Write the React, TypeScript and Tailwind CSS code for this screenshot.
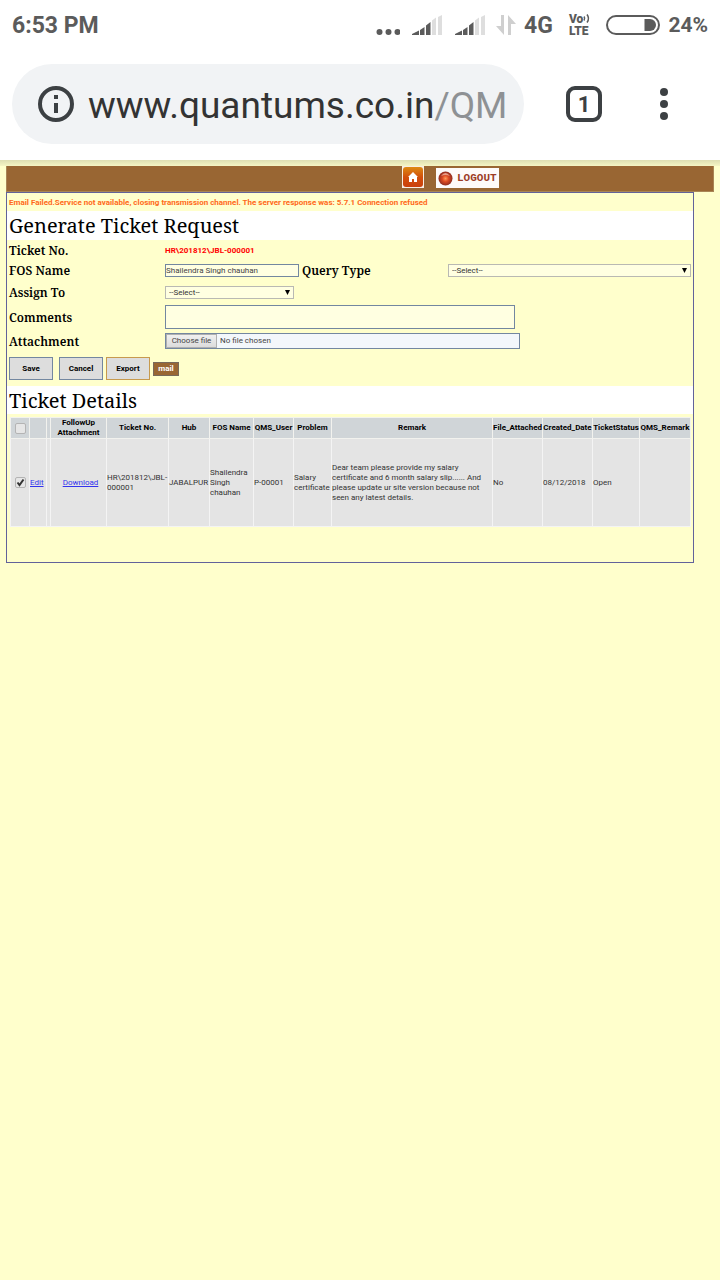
import React from "react";

const serif = "font-['Noto_Serif','DejaVu_Serif_Condensed','DejaVu_Serif',serif]";

function Signal() {
  return (
    <svg className="mb-[2px] h-5 w-[30px]" viewBox="0 0 30 20" aria-hidden="true">
      <path d="M0 20V19L7 15.500V20ZM8 15l4.500-3V20H8ZM14 10.500l4.500-3.500V20H14Z" fill="#5b5b5b" />
      <path d="M20 5.500l4-3V20H20ZM26 2l4-2V20H26Z" fill="#dedede" />
    </svg>
  );
}

function StatusBar() {
  return (
    <div className="flex h-12 items-center justify-between pt-[3px] pr-3 pl-3 text-[#5b5b5b]">
      <span className="pt-[1px] text-[23px] font-bold">6:53 PM</span>
      <div className="flex items-center">
        <svg className="mt-3 mr-3 h-2 w-6" viewBox="0 0 24 8" fill="#5b5b5b" aria-hidden="true">
          <circle cx="3.500" cy="4" r="3" />
          <circle cx="12.500" cy="4" r="3" />
          <circle cx="21.500" cy="4" r="3" />
        </svg>
        <Signal />
        <span className="w-[13px]" />
        <Signal />
        <svg className="mr-2 mb-[2px] ml-[11px] h-5 w-5" viewBox="0 0 20 20" fill="#cfcfcf" aria-hidden="true">
          <path d="M5 0h3v20L0 11h5zM12 20h3V9h5L12 0z" />
        </svg>
        <span className="pt-[1px] text-[23px] font-bold">4G</span>
        <span className="mr-[15px] mb-[2px] ml-4 flex flex-col items-start text-[12px] leading-[12px] font-black">
          <span className="flex">
            Vo
            <svg className="h-[11px] w-2" viewBox="0 0 8 11" fill="none" stroke="#5b5b5b" strokeWidth="1.500" aria-hidden="true">
              <path d="M1 3.500q1.500 2 0 4M4 1.500q3 4 0 8" />
            </svg>
          </span>
          <span>LTE</span>
        </span>
        <svg className="mr-2 mb-[2px] h-5 w-[54px]" viewBox="0 0 54 20" aria-hidden="true">
          <rect x="1" y="1" width="52" height="18" rx="9" fill="none" stroke="#5b5b5b" strokeWidth="2" />
          <path d="M38.500 4H44a6 6 0 0 1 0 12H38.500Z" fill="#5b5b5b" />
        </svg>
        <span className="text-[21px] font-bold">24%</span>
      </div>
    </div>
  );
}

function AddressBar() {
  return (
    <div className="flex items-center px-3 pt-4 pb-4">
      <div className="flex h-20 flex-1 items-center rounded-full bg-[#f1f3f5] pl-[26px] text-[#333]">
        <svg className="mr-[14px] h-9 w-9 shrink-0" viewBox="0 0 36 36" aria-hidden="true">
          <circle cx="18" cy="18" r="16" fill="none" stroke="#3c4043" strokeWidth="4" />
          <path d="M16 9h4v4h-4zM16 17h4v10h-4z" fill="#3c4043" />
        </svg>
        <span className="pt-1 text-[37px] leading-10 whitespace-nowrap">
          www.quantums.co.in<span className="text-[#8e9194]">/QM</span>
        </span>
      </div>
      <button aria-label="Tabs" className="mr-[58px] ml-[42px] flex h-9 w-9 items-center justify-center rounded-[9px] border-4 border-[#3c4043] text-[22px] font-bold text-[#3c4043]">
        1
      </button>
      <button aria-label="Menu" className="mr-10 h-8 w-2">
        <svg className="h-8 w-2" viewBox="0 0 8 32" fill="#3c4043" aria-hidden="true">
          <circle cx="4" cy="4" r="4" />
          <circle cx="4" cy="16" r="4" />
          <circle cx="4" cy="28" r="4" />
        </svg>
      </button>
    </div>
  );
}

function Banner() {
  return (
    <div className="flex h-[26px] items-start border-x border-b border-[#a98555] bg-[#996633] pl-[395px]">
      <a href="#home" aria-label="Home" className="mr-3 block">
        <svg className="h-[22px] w-[22px]" viewBox="0 0 22 22" aria-hidden="true">
          <defs>
            <linearGradient id="homeFill" x1="0" y1="0" x2="0" y2="1">
              <stop offset="0" stopColor="#dd8a13" />
              <stop offset="0.500" stopColor="#d2500c" />
              <stop offset="1" stopColor="#cb400c" />
            </linearGradient>
          </defs>
          <path d="M0 0h22v22H0z" fill="#f8eee4" />
          <rect x="1" y="1" width="20" height="20" rx="3" fill="url(#homeFill)" />
          <path d="M11 6l5 5h-1v5h-3v-3h-2v3H7v-5H6z" fill="#fff" />
        </svg>
      </a>
      <a href="#logout" className="mt-[2px] flex h-5 w-[63px] items-center bg-[#fdfafa] pl-[2px] font-['Liberation_Mono',monospace] text-[11px] font-bold text-[#9c3c26]">
        <svg className="mr-1 h-[15px] w-[15px] shrink-0" viewBox="0 0 15 15" aria-hidden="true">
          <defs>
            <radialGradient id="orb">
              <stop offset="0" stopColor="#ff9a5a" />
              <stop offset="0.450" stopColor="#dd4a22" />
              <stop offset="1" stopColor="#8f2c20" />
            </radialGradient>
          </defs>
          <circle cx="7.500" cy="7.500" r="7" fill="url(#orb)" />
          <path d="M3 5q4.500-6 9 0q-4.500-2-9 0" fill="#efb5a4" opacity=".8" />
        </svg>
        LOGOUT
      </a>
    </div>
  );
}

function SelectBox({ id, className }: { id: string; className: string }) {
  return (
    <div className={`relative ${className}`}>
      <select id={id} className="block h-[13px] w-full appearance-none border border-[#b9b9b3] bg-[#ffffe1] pl-[3px] text-[8px] leading-[11px] text-[#333]">
        <option>--Select--</option>
      </select>
      <svg className="pointer-events-none absolute top-1 right-1 h-[5px] w-[5px]" viewBox="0 0 5 5" aria-hidden="true">
        <path d="M0 0h5L2.500 5z" fill="#000" />
      </svg>
    </div>
  );
}

const labelStyle = `w-[156px] shrink-0 text-[12px] leading-4 font-semibold ${serif}`;
const buttonStyle = "h-[23px] w-11 border bg-[#dddddd] text-[8px] leading-3 font-bold";

function TicketForm() {
  return (
    <form className="pb-[6px] pl-[2px]" onSubmit={(e) => e.preventDefault()}>
      <div className="flex h-[21px] items-center">
        <span className={labelStyle}>Ticket No.</span>
        <span className="text-[8px] leading-3 font-bold text-[#ff0000]">HR\201812\JBL-000001</span>
      </div>
      <div className="flex h-[19px] items-center pr-[2px]">
        <label htmlFor="fos" className={labelStyle}>FOS Name</label>
        <input id="fos" defaultValue="Shailendra Singh chauhan" className="h-[13px] w-[134px] border border-[#7387a0] bg-[#ffffe1] text-[8px] text-[#444]" />
        <label htmlFor="query" className={`ml-[3px] w-[146px] shrink-0 text-[12px] leading-4 font-semibold ${serif}`}>Query Type</label>
        <SelectBox id="query" className="flex-1" />
      </div>
      <div className="flex h-[25px] items-center">
        <label htmlFor="assign" className={labelStyle}>Assign To</label>
        <SelectBox id="assign" className="w-[129px]" />
      </div>
      <div className="flex h-6 items-center">
        <label htmlFor="comments" className={`${labelStyle} pt-[1px]`}>Comments</label>
        <textarea id="comments" className="block h-6 w-[350px] resize-none border border-[#7387a0] bg-[#ffffe1] text-[8px]" />
      </div>
      <div className="flex h-6 items-center">
        <label htmlFor="file" className={`${labelStyle} pt-[1px]`}>Attachment</label>
        <label className="flex h-4 w-[355px] items-center border border-[#7387a0] bg-[#f3f7fb] text-[8px] leading-3 text-[#444]">
          <input id="file" type="file" className="sr-only" />
          <span className="mr-[3px] flex h-[14px] w-[51px] items-center justify-center border border-[#b0b0b0] bg-linear-to-b from-[#f0f0f0] to-[#dcdcdc]">Choose file</span>
          No file chosen
        </label>
      </div>
      <div className="mt-1 flex items-center">
        <button className={`${buttonStyle} mr-[6px] border-[#7387a0]`}>Save</button>
        <button className={`${buttonStyle} mr-[3px] border-[#7387a0]`}>Cancel</button>
        <button className={`${buttonStyle} mr-[3px] border-[#c79a4e]`}>Export</button>
        <button className="h-[14px] w-[26px] border border-[#77695b] bg-[#996633] text-[8px] leading-3 font-bold text-white">mail</button>
      </div>
    </form>
  );
}

const headers = ["FollowUp Attachment", "Ticket No.", "Hub", "FOS Name", "QMS_User", "Problem", "Remark", "File_Attached", "Created_Date", "TicketStatus", "QMS_Remark"];
const cells = [
  "HR\\201812\\JBL-000001",
  "JABALPUR",
  "Shailendra Singh chauhan",
  "P-00001",
  "Salary certificate",
  "Dear team please provide my salary certificate and 6 month salary slip...... And please update ur site version because not seen any latest details.",
  "No",
  "08/12/2018",
  "Open",
  "",
];

function Tick({ label, checked }: { label: string; checked?: boolean }) {
  return (
    <span className="relative mx-auto block h-[11px] w-[11px]">
      <input type="checkbox" aria-label={label} defaultChecked={checked} className="peer block h-[11px] w-[11px] appearance-none rounded-[2px] border border-[#b4b4b4] bg-[#e6e6e6]" />
      <svg className="pointer-events-none absolute inset-0 hidden h-[11px] w-[11px] peer-checked:block" viewBox="0 0 11 11" aria-hidden="true">
        <path d="M2.500 5.500L4.500 8L8.500 2.500" fill="none" stroke="#333" strokeWidth="2" />
      </svg>
    </span>
  );
}

function TicketTable() {
  return (
    <table className="w-full table-fixed border-collapse text-[8px] leading-[10px] text-[#333]">
      <colgroup>
        <col className="w-[19px]" />
        <col className="w-[17px]" />
        <col className="w-1" />
        <col className="w-14" />
        <col className="w-[62px]" />
        <col className="w-[41px]" />
        <col className="w-11" />
        <col className="w-10" />
        <col className="w-[38px]" />
        <col className="w-[161px]" />
        <col className="w-[50px]" />
        <col className="w-[50px]" />
        <col className="w-[47px]" />
        <col className="w-[51px]" />
      </colgroup>
      <thead>
        <tr className="h-[21px] bg-[#d0d5d8] text-black">
          <th className="border border-[#f2f2ee] p-0"><Tick label="Select all" /></th>
          <th className="border border-[#f2f2ee] p-0" />
          <th className="border border-[#f2f2ee] p-0" />
          {headers.map((h) => (
            <th key={h} className="border border-[#f2f2ee] p-0 text-center font-bold">{h}</th>
          ))}
        </tr>
      </thead>
      <tbody>
        <tr className="h-[88px] bg-[#e4e4e4]">
          <td className="border border-[#f4f4f4] p-0"><Tick label="Select ticket" checked /></td>
          <td className="border border-[#f4f4f4] p-0"><a href="#edit" className="text-[#3333ee] underline">Edit</a></td>
          <td className="border border-[#f4f4f4] p-0" />
          <td className="border border-[#f4f4f4] p-0 pl-1 text-center"><a href="#download" className="text-[#3333ee] underline">Download</a></td>
          {cells.map((c, i) => (
            <td key={i} className="border border-[#f4f4f4] p-0">{c}</td>
          ))}
        </tr>
      </tbody>
    </table>
  );
}

export default function App() {
  return (
    <div className="min-h-screen bg-[#ffffcc] font-[Roboto,sans-serif] text-black">
      <header className="bg-white">
        <StatusBar />
        <AddressBar />
      </header>
      <div className="h-[6px] bg-linear-to-b from-[#dedeb2] to-[#f5f5c4]" />
      <main className="px-[6px]">
        <Banner />
        <div className="mr-5 border border-[#62629a] pb-[35px]">
          <p className="h-[18px] pl-[2px] text-[8px] leading-5 font-bold text-[#ff6a1a]">
            Email Failed.Service not available, closing transmission channel. The server response was: 5.7.1 Connection refused
          </p>
          <h1 className={`h-[29px] bg-white pl-[2px] text-[20px] leading-[29px] ${serif}`}>Generate Ticket Request</h1>
          <TicketForm />
          <h2 className={`h-7 bg-white pl-[2px] text-[20px] leading-[29px] ${serif}`}>Ticket Details</h2>
          <div className="pt-[3px] pr-[3px] pl-[3px]">
            <TicketTable />
          </div>
        </div>
      </main>
    </div>
  );
}
